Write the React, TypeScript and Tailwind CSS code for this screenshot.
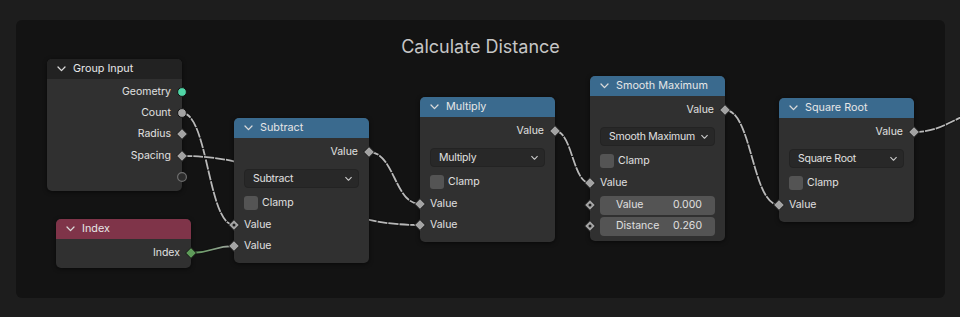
import React from "react"

type SockKind = "circle" | "diamond" | "dot" | "hollow"

const GRAY = "#a3a3a3"

function Socket({ kind, color = GRAY, pos }: { kind: SockKind; color?: string; pos: string }) {
  return (
    <svg className={`absolute ${pos} top-1/2 -translate-y-1/2`} width="12" height="12" viewBox="0 0 12 12">
      {kind === "circle" && <circle cx="6" cy="6" r="4.4" fill={color} stroke="#151515" strokeWidth="1" />}
      {kind === "hollow" && <circle cx="6" cy="6" r="4.4" fill="#2b2b2b" stroke="#6e6e6e" strokeWidth="1.2" />}
      {(kind === "diamond" || kind === "dot") && (
        <polygon points="6,0.6 11.4,6 6,11.4 0.6,6" fill={color} stroke="#151515" strokeWidth="1" />
      )}
      {kind === "dot" && <circle cx="6" cy="6" r="1.5" fill="#1e1e1e" />}
    </svg>
  )
}

function Chevron({ className }: { className?: string }) {
  return (
    <svg className={className} width="9" height="6" viewBox="0 0 9 6">
      <polyline points="1,1 4.5,4.6 8,1" fill="none" stroke="currentColor" strokeWidth="1.3" strokeLinecap="round" strokeLinejoin="round" />
    </svg>
  )
}

function Node({ className, header, title, children }: { className: string; header: string; title: string; children: React.ReactNode }) {
  return (
    <div className={`absolute w-[135px] rounded-[5px] bg-[#303030] shadow-[0_1px_4px_rgba(0,0,0,0.55)] ${className}`}>
      <div className={`flex h-[20px] items-center gap-[7px] rounded-t-[5px] pl-[10px] text-[#e6e6e6] ${header}`}>
        <Chevron className="text-[#dadada]" />
        <span className="text-[10.8px]">{title}</span>
      </div>
      {children}
    </div>
  )
}

function OutRow({ label, kind = "diamond", color, h = "h-[22px]" }: { label: string; kind?: SockKind; color?: string; h?: string }) {
  return (
    <div className={`relative flex items-center justify-end pr-[11px] ${h}`}>
      {label}
      <Socket kind={kind} color={color} pos="right-[-6px]" />
    </div>
  )
}

function InRow({ label, kind = "diamond" }: { label: string; kind?: SockKind }) {
  return (
    <div className="relative flex h-[21.5px] items-center pl-[10px]">
      {label}
      <Socket kind={kind} pos="left-[-6px]" />
    </div>
  )
}

function Dropdown({ label }: { label: string }) {
  return (
    <div className="mx-[10px] mt-[6px] flex h-[19px] items-center justify-between whitespace-nowrap rounded-[4px] border border-[#232323] bg-[#282828] pl-[8px] pr-[5px]">
      <span className="tracking-[-0.25px]">{label}</span>
      <Chevron className="scale-[0.8] text-[#d0d0d0]" />
    </div>
  )
}

function Clamp() {
  return (
    <div className="mt-[4px] flex h-[22px] items-center gap-[4px] pl-[10px]">
      <div className="h-[14px] w-[14px] rounded-[3px] bg-[#545454]" />
      <span>Clamp</span>
    </div>
  )
}

function Field({ label, value }: { label: string; value: string }) {
  return (
    <div className="relative mx-[10px] mt-[2px] flex h-[19px] items-center justify-between rounded-[4px] bg-[#545454] pl-[16px] pr-[13px]">
      <span>{label}</span>
      <span>{value}</span>
      <Socket kind="dot" pos="left-[-16px]" />
    </div>
  )
}

function link(x1: number, y1: number, x2: number, y2: number) {
  const h = Math.abs(x2 - x1) * 0.5
  return `M ${x1} ${y1} C ${x1 + h} ${y1}, ${x2 - h} ${y2}, ${x2} ${y2}`
}

const links = [
  link(182, 113, 234, 225),
  link(182, 156, 420, 225),
  link(369, 152, 420, 204),
  link(555, 131, 590, 183),
  link(725, 110, 779, 205),
  "M 914 132 C 940 132, 950 120, 975 112",
]

export default function App() {
  return (
    <div className="relative h-[317px] w-[960px] overflow-hidden bg-[#1d1d1d] font-['Inter','Liberation_Sans',sans-serif] text-[10.5px] text-[#e0e0e0]">
      <div className="absolute left-[16px] top-[20px] h-[278px] w-[929px] rounded-[6px] bg-[#131313] pt-[15px] text-center text-[18px] leading-[24px] text-[#c6c6c6]">
        Calculate Distance
      </div>

      <svg className="pointer-events-none absolute inset-0" width="960" height="317">
        <defs>
          <linearGradient id="idx" x1="191" y1="0" x2="234" y2="0" gradientUnits="userSpaceOnUse">
            <stop offset="0" stopColor="#5e9b59" />
            <stop offset="1" stopColor={GRAY} />
          </linearGradient>
        </defs>
        {links.map((d, i) => (
          <g key={i}>
            <path d={d} fill="none" stroke="#101010" strokeWidth="3.5" />
            <path d={d} fill="none" stroke="#b8b8b8" strokeWidth="1.8" strokeDasharray="10 1" />
          </g>
        ))}
        <path d={link(191, 253, 234, 246)} fill="none" stroke="#101010" strokeWidth="3.5" />
        <path d={link(191, 253, 234, 246)} fill="none" stroke="url(#idx)" strokeWidth="1.8" />
      </svg>

      <Node className="left-[47px] top-[59px]" header="bg-[#222222]" title="Group Input">
        <div className="pb-[4px] pt-[2px]">
          <OutRow label="Geometry" kind="circle" color="#4fd4a5" h="h-[21.3px]" />
          <OutRow label="Count" kind="circle" h="h-[21.3px]" />
          <OutRow label="Radius" h="h-[21.3px]" />
          <OutRow label="Spacing" h="h-[21.3px]" />
          <OutRow label="" kind="hollow" h="h-[21.3px]" />
        </div>
      </Node>

      <Node className="left-[56px] top-[219px]" header="bg-[#7f3449]" title="Index">
        <div className="pb-[4px] pt-[3px]">
          <OutRow label="Index" color="#5e9b59" />
        </div>
      </Node>

      <Node className="left-[234px] top-[118px]" header="bg-[#3a6a8e]" title="Subtract">
        <div className="pb-[6px] pt-[3px]">
          <OutRow label="Value" />
          <Dropdown label="Subtract" />
          <Clamp />
          <InRow label="Value" kind="dot" />
          <InRow label="Value" />
        </div>
      </Node>

      <Node className="left-[420px] top-[97px]" header="bg-[#3a6a8e]" title="Multiply">
        <div className="pb-[6px] pt-[3px]">
          <OutRow label="Value" />
          <Dropdown label="Multiply" />
          <Clamp />
          <InRow label="Value" />
          <InRow label="Value" />
        </div>
      </Node>

      <Node className="left-[590px] top-[76px]" header="bg-[#3a6a8e]" title="Smooth Maximum">
        <div className="pb-[5px] pt-[3px]">
          <OutRow label="Value" />
          <Dropdown label="Smooth Maximum" />
          <Clamp />
          <InRow label="Value" />
          <Field label="Value" value="0.000" />
          <Field label="Distance" value="0.260" />
        </div>
      </Node>

      <Node className="left-[779px] top-[98px]" header="bg-[#3a6a8e]" title="Square Root">
        <div className="pb-[6px] pt-[3px]">
          <OutRow label="Value" />
          <Dropdown label="Square Root" />
          <Clamp />
          <InRow label="Value" />
        </div>
      </Node>
    </div>
  )
}
